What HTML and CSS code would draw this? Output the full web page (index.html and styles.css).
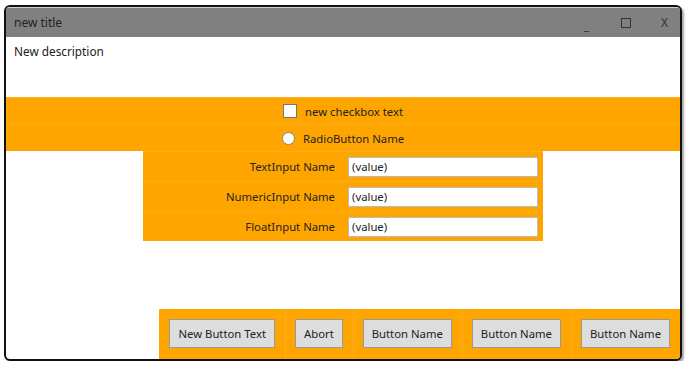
FILE: index.html
```html
<!DOCTYPE html>
<html lang="en">
<head>
    <meta charset="UTF-8">
    <title>new title</title>
    <link rel="stylesheet" href="styles.css">
</head>
<body>
    <div class="window">
        <div class="titlebar">
            <span class="title">new title</span>
            <div class="controls">
                <span class="ctl ctl-min">_</span>
                <span class="ctl"><span class="max-box"></span></span>
                <span class="ctl">X</span>
            </div>
        </div>
        <div class="description">New description</div>

        <div class="row">
            <label class="check">
                <span class="box"></span>
                <span>new checkbox text</span>
            </label>
        </div>
        <div class="row">
            <label class="check">
                <span class="radio"></span>
                <span>RadioButton Name</span>
            </label>
        </div>

        <div class="form">
            <div class="field">
                <label>TextInput Name</label>
                <input type="text" value="(value)">
            </div>
            <div class="field">
                <label>NumericInput Name</label>
                <input type="text" value="(value)">
            </div>
            <div class="field">
                <label>FloatInput Name</label>
                <input type="text" value="(value)">
            </div>
        </div>

        <div class="spacer"></div>

        <div class="button-bar">
            <div class="cell"><button class="btn">New Button Text</button></div>
            <div class="cell"><button class="btn">Abort</button></div>
            <div class="cell"><button class="btn">Button Name</button></div>
            <div class="cell"><button class="btn">Button Name</button></div>
            <div class="cell"><button class="btn">Button Name</button></div>
        </div>
    </div>
</body>
</html>
```

FILE: styles.css
```css
* {
    box-sizing: border-box;
    margin: 0;
    padding: 0;
}

body {
    font-family: "Segoe UI", "Noto Sans", sans-serif;
    font-size: 11.3px;
    color: #222;
    background: white;
}

.window {
    width: 678px;
    height: 356px;
    margin: 5px 0 0 4px;
    border: 2px solid #111;
    border-radius: 6px;
    box-shadow: 2px 2px 2px rgba(0,0,0,0.35);
    background: white;
    display: flex;
    flex-direction: column;
    overflow: hidden;
}

.titlebar {
    height: 30px;
    background: #808080;
    border-top: 1px solid #d0d0d0;
    display: flex;
    align-items: center;
    justify-content: space-between;
    padding-left: 8px;
    flex-shrink: 0;
}

.title {
    font-size: 12px;
}

.controls {
    display: flex;
    align-items: center;
    margin-right: -4px;
}

.ctl {
    width: 39px;
    text-align: center;
    color: #333;
    font-size: 12px;
}

.ctl-min {
    padding-top: 6px;
}

.max-box {
    display: inline-block;
    width: 10px;
    height: 10px;
    border: 1px solid #333;
    vertical-align: -1px;
}

.description {
    height: 60px;
    padding: 6px 8px;
    font-size: 11.8px;
    flex-shrink: 0;
}

.row {
    height: 27px;
    background: #ffa500;
    border-top: 1px solid #ffad1c;
    display: flex;
    justify-content: center;
    align-items: center;
    flex-shrink: 0;
}

.row:first-of-type {
    border-top: none;
}

.check {
    display: flex;
    align-items: center;
    gap: 8px;
}

.box {
    width: 14px;
    height: 14px;
    background: white;
    border: 1px solid #777;
}

.radio {
    width: 13px;
    height: 13px;
    border-radius: 50%;
    background: white;
    border: 1px solid #888;
}

.form {
    width: 400px;
    margin: 0 auto;
    background: #ffa500;
    flex-shrink: 0;
}

.field {
    height: 30px;
    display: flex;
    align-items: center;
    border-top: 1px solid #ffad1c;
    padding-right: 5px;
}

.field label {
    flex: 1;
    text-align: right;
    padding-right: 13px;
}

.field input {
    width: 190px;
    height: 20px;
    border: 1px solid #bbb;
    padding: 0 3px;
    font-family: inherit;
    font-size: 11.3px;
    color: #222;
    outline: none;
}

.spacer {
    flex: 1;
}

.button-bar {
    align-self: flex-end;
    display: flex;
    height: 50px;
    background: #ffa500;
    flex-shrink: 0;
}

.cell {
    padding: 10px 10px 11px 10px;
    box-shadow: inset 1px 0 #ffad1c;
}

.cell:first-child {
    box-shadow: none;
}

.btn {
    height: 29px;
    padding: 0 8px;
    background: #dddddd;
    border: 1px solid #999;
    font-family: inherit;
    font-size: 11.3px;
    color: #222;
}
```
